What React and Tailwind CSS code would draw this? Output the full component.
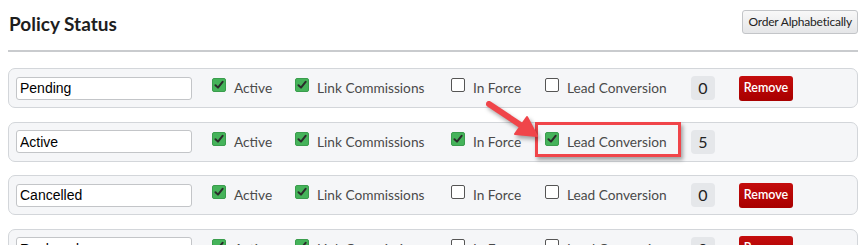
import React from "react";

const statuses = [
	{ name: "Pending", active: true, link: true, inForce: false, lead: false, count: 0, removable: true },
	{ name: "Active", active: true, link: true, inForce: true, lead: true, count: 5, removable: false },
	{ name: "Cancelled", active: true, link: true, inForce: false, lead: false, count: 0, removable: true },
	{ name: "Replaced", active: true, link: true, inForce: false, lead: false, count: 0, removable: true },
];

const Check = ({ checked }) =>
	checked ? (
		<span className="w-[14px] h-[14px] rounded-[2px] bg-[#45b35a] border border-[#3a9d4d] flex items-center justify-center shrink-0 -mt-[5px]">
			<svg width="10" height="10" viewBox="0 0 10 10">
				<path d="M1.5 5.2 L4 7.6 L8.6 1.8" fill="none" stroke="#2b2b2b" strokeWidth="2" strokeLinecap="round" strokeLinejoin="round" />
			</svg>
		</span>
	) : (
		<span className="w-[14px] h-[14px] rounded-[2px] bg-white border border-[#555] shrink-0 -mt-[5px]" />
	);

const Field = ({ checked, label, width }) => (
	<label className={`flex items-center gap-[8px] shrink-0 ${width}`}>
		<Check checked={checked} />
		<span className="text-[13.7px] text-[#4a4a4a] leading-none">{label}</span>
	</label>
);

export default function App() {
	return (
		<div className="relative w-[866px] h-[245px] overflow-hidden bg-white px-2 font-['Lato','Noto_Sans',sans-serif]">
			{/* Header */}
			<div className="flex items-center justify-between pt-[10px] pb-[16px] border-b-2 border-[#c9cbce]">
				<h2 className="text-[19px] font-bold text-[#1e1e1e] pl-[1px] pt-[3px] leading-none">Policy Status</h2>
				<button className="h-[24px] px-[5px] text-[12px] tracking-[-0.2px] text-[#222] rounded-[3px] border border-[#c3c5c8] bg-gradient-to-b from-[#f8f8f8] to-[#e5e6e8]">
					Order Alphabetically
				</button>
			</div>

			{/* Rows */}
			<div className="flex flex-col gap-[13.5px] mt-[16px]">
				{statuses.map((s) => (
					<div
						key={s.name}
						className="h-[40px] shrink-0 flex items-center pl-[7px] pr-[8px] rounded-[7px] border border-[#d3d6da] bg-[#f5f6f8]"
					>
						<input
							readOnly
							value={s.name}
							className="w-[176px] h-[23px] px-[3px] bg-white border border-[#c3c5c8] rounded-[3px] text-[14px] text-black font-['Liberation_Sans',Arial,sans-serif] outline-none"
						/>
						<div className="w-[20px] shrink-0" />
						<Field checked={s.active} label="Active" width="w-[83px]" />
						<Field checked={s.link} label="Link Commissions" width="w-[156px]" />
						<Field checked={s.inForce} label="In Force" width="w-[94px]" />
						<Field checked={s.lead} label="Lead Conversion" width="w-[146px]" />
						<div className="w-[48px] shrink-0">
							<span className="w-[24px] h-[24px] rounded-[4px] bg-[#e5e7ea] flex items-center justify-center text-[16px] text-[#222]">
								{s.count}
							</span>
						</div>
						{s.removable && (
							<button className="w-[54px] h-[25px] rounded-[3px] bg-gradient-to-b from-[#c40d0d] to-[#a80000] text-white text-[12.5px] font-semibold">
								Remove
							</button>
						)}
					</div>
				))}
			</div>

			{/* Annotation */}
			<div className="absolute left-[535px] top-[122px] w-[146px] h-[35px] border-[3px] border-[#f0454a] shadow-[2px_3px_4px_rgba(0,0,0,0.35)]" />
			<svg
				className="absolute left-0 top-0 pointer-events-none"
				width="866"
				height="245"
				style={{ filter: "drop-shadow(2px 3px 2px rgba(0,0,0,0.35))" }}
			>
				<line x1="489" y1="104" x2="522" y2="126" stroke="#f0454a" strokeWidth="6" strokeLinecap="round" />
				<polygon points="537,136 515,134 527,117" fill="#f0454a" stroke="#f0454a" strokeWidth="2" strokeLinejoin="round" />
			</svg>
		</div>
	);
}
